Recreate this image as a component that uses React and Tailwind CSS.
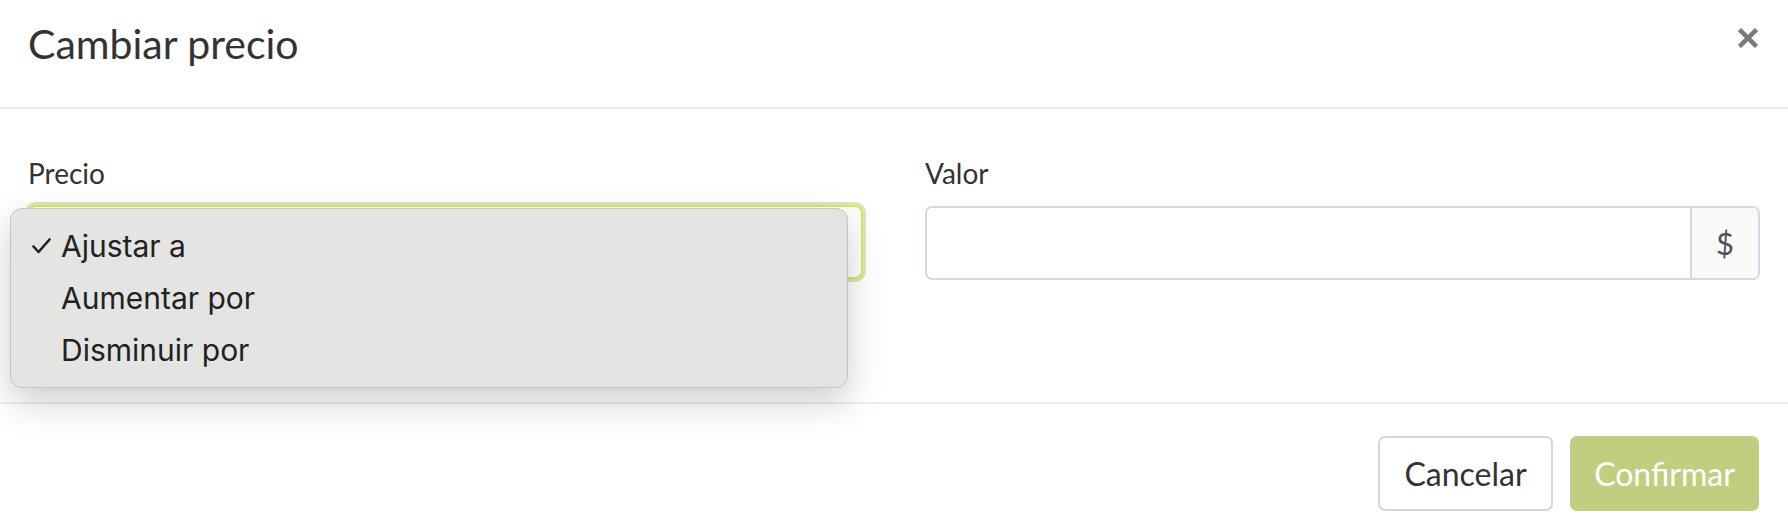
import React, { useState } from "react";

const opciones = ["Ajustar a", "Aumentar por", "Disminuir por"];

export default function App() {
  const [modo, setModo] = useState("Ajustar a");
  const [valor, setValor] = useState("");

  return (
    <div
      className="w-[1788px] h-[532px] bg-white overflow-hidden text-[#333]"
      style={{ fontFamily: "Lato, 'Liberation Sans', sans-serif" }}
    >
      {/* cabecera */}
      <div className="h-[109px] border-b-2 border-[#ededf1] flex justify-between items-start pl-[28px] pr-[30px]">
        <h2 className="text-[41px] leading-[48px] pt-[20px] font-normal">Cambiar precio</h2>
        <button className="mt-[28px] text-[#7a7a7a]" aria-label="Cerrar">
          <svg width="20" height="20" viewBox="0 0 20 20">
            <path d="M1.5 1.5 L18.5 18.5 M18.5 1.5 L1.5 18.5" stroke="currentColor" strokeWidth="4.5" strokeLinecap="butt" />
          </svg>
        </button>
      </div>

      {/* cuerpo */}
      <div className="h-[293px] px-[28px] pt-[44px] grid grid-cols-2 gap-x-[62px] items-start">
        <div>
          <label className="block text-[28px] leading-[40px] mb-[12px]">Precio</label>
          <div className="relative h-[74px] bg-white border-2 border-[#d6ee52] rounded-[8px] shadow-[0_0_0_3px_#dfe4c6]">
            {/* menú nativo abierto */}
            <div
              className="absolute left-[-20px] right-[13px] top-[1px] z-10 bg-[#e4e4e3] border border-[#c4c4c4] rounded-[12px] py-[11px] shadow-[0_14px_36px_rgba(0,0,0,0.2)]"
              style={{ fontFamily: "Inter, 'Noto Sans', sans-serif" }}
            >
              {opciones.map((op) => (
                <div
                  key={op}
                  onClick={() => setModo(op)}
                  className="h-[52px] leading-[52px] flex items-center text-[30px] text-[#222]"
                >
                  <span className="w-[50px] flex justify-end pr-[10px]">
                    {modo === op && (
                      <svg width="19" height="16" viewBox="0 0 19 16">
                        <path d="M1.5 8.5 L6.5 14 L17.5 1.5" fill="none" stroke="#222" strokeWidth="2.6" strokeLinecap="round" strokeLinejoin="round" />
                      </svg>
                    )}
                  </span>
                  <span>{op}</span>
                </div>
              ))}
            </div>
          </div>
        </div>

        <div>
          <label className="block text-[28px] leading-[40px] mb-[13px]">Valor</label>
          <div className="flex h-[74px] border-2 border-[#d5d9de] rounded-[7px] overflow-hidden">
            <input
              value={valor}
              onChange={(e) => setValor(e.target.value)}
              className="flex-1 px-4 text-[28px] outline-none"
            />
            <span className="w-[68px] border-l-2 border-[#d5d9de] bg-[#f9f9fa] flex items-center justify-center text-[31px] text-[#4a5056]">
              $
            </span>
          </div>
        </div>
      </div>

      {/* pie */}
      <div className="border-t-2 border-[#ededf1] flex justify-end gap-[17px] pr-[29px] pt-[32px]">
        <button className="w-[175px] h-[75px] border-2 border-[#d3d7dc] rounded-[7px] text-[32px] text-[#333] bg-white">
          Cancelar
        </button>
        <button className="w-[189px] h-[75px] rounded-[7px] bg-[#c2ce7f] text-[32px] text-white">
          Confirmar
        </button>
      </div>
    </div>
  );
}
